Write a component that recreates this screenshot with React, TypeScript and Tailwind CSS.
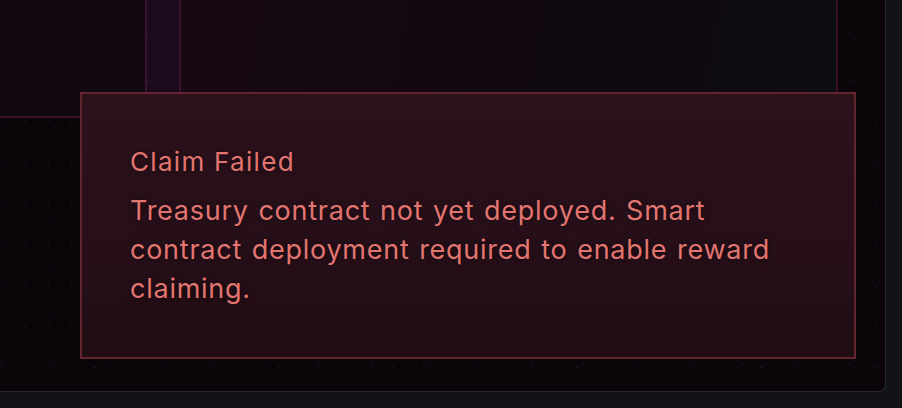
import React from "react";

const speckle =
  "bg-[radial-gradient(rgba(110,60,100,0.16)_0.8px,transparent_1.4px),radial-gradient(rgba(80,50,85,0.12)_0.8px,transparent_1.4px),radial-gradient(rgba(100,55,95,0.10)_1px,transparent_1.6px)] bg-[length:37px_29px,23px_41px,53px_47px] bg-[position:3px_5px,14px_19px,27px_11px]";

export default function App() {
  return (
    <div className="w-[902px] h-[408px] bg-[#111317] overflow-hidden" style={{ fontFamily: "Inter, 'Noto Sans', sans-serif" }}>
      <div className={`relative w-[886px] h-[392px] bg-[#0b050a] border-r border-b border-[#26272d] rounded-br-[7px] overflow-hidden ${speckle}`}>
        <div className="flex items-start">
          {/* left box */}
          <div className="w-[145px] h-[118px] bg-[#110810] border-b-2 border-[#3a1426]"></div>
          {/* purple strip */}
          <div className={`w-[36px] h-[240px] bg-[#1a0a1b] border-x-2 border-[#3b1231] ${speckle}`}></div>
          {/* main card */}
          <div className="w-[657px] h-[240px] border-r-2 border-[#3a1027] bg-[linear-gradient(100deg,#170914_0%,#120811_45%,#0e0a10_75%,#0d0f14_100%)]"></div>
        </div>

        {/* toast */}
        <div className="absolute left-[80px] top-[92px] w-[776px] h-[267px] border-2 border-[#63252d] bg-[linear-gradient(180deg,#2c111b_0%,#27101a_50%,#220c14_100%)] p-12 text-[#e27570] [text-shadow:0_0_6px_rgba(0,0,0,0.55)]">
          <div className="text-[26px] leading-[39px] font-normal tracking-[1.3px]">Claim Failed</div>
          <div className="mt-[10px] max-w-[660px] text-[27px] leading-[39px] font-normal tracking-[0.75px] [word-spacing:1.3px]">
            Treasury contract not yet deployed. Smart contract deployment required to enable reward claiming.
          </div>
        </div>
      </div>
    </div>
  );
}
